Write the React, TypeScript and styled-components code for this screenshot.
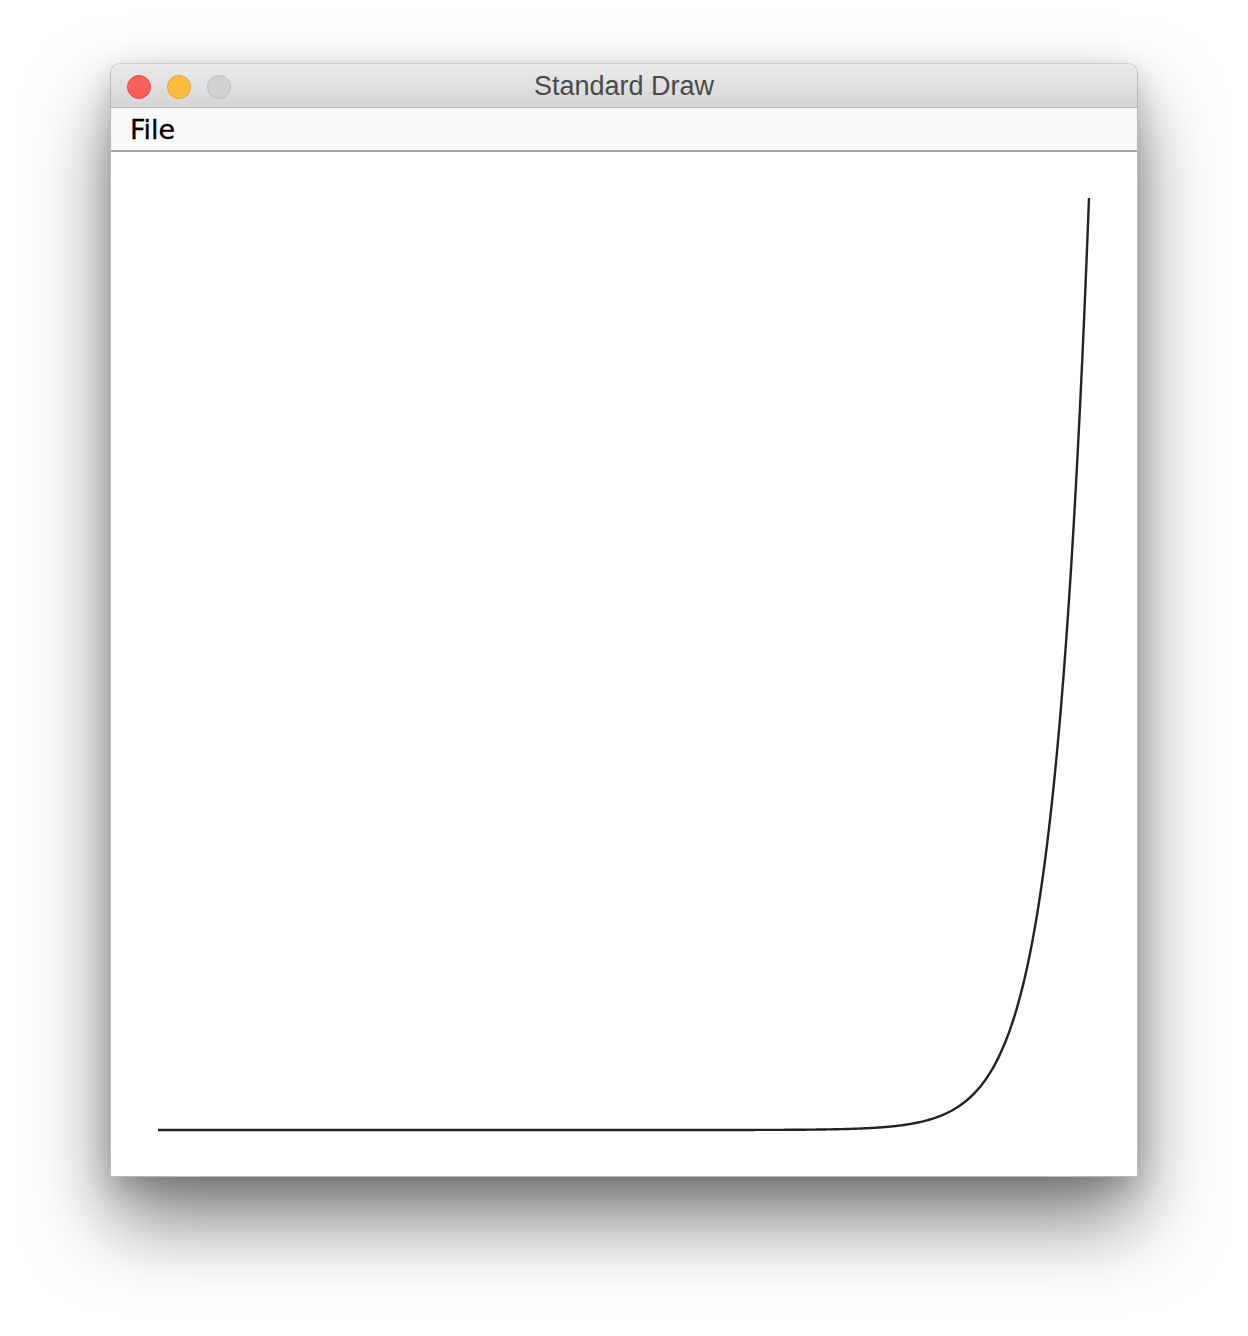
import styled, { createGlobalStyle } from 'styled-components';

const GlobalStyle = createGlobalStyle`
  html, body {
    margin: 0;
    padding: 0;
    background: #ffffff;
  }
  #root {
    width: 1248px;
    height: 1336px;
  }
`;

const Page = styled.div`
  display: flex;
  justify-content: center;
  align-items: flex-start;
  padding-top: 63px;
  height: 100%;
  box-sizing: border-box;
`;

const Window = styled.div`
  width: 1026px;
  display: flex;
  flex-direction: column;
  border-radius: 10px 10px 0 0;
  overflow: hidden;
  border: 1px solid #b9b9b9;
  border-top-color: #cfcfcf;
  box-shadow: 0 44px 80px rgba(0, 0, 0, 0.5), 0 10px 30px rgba(0, 0, 0, 0.18);
  background: #ffffff;
`;

const TitleBar = styled.div`
  height: 43px;
  display: grid;
  grid-template-columns: 1fr auto 1fr;
  align-items: center;
  padding: 0 16px;
  background: linear-gradient(#ebebeb, #d5d5d5);
  border-bottom: 1px solid #b3b3b3;
`;

const Lights = styled.div`
  display: flex;
  gap: 16px;
  padding-top: 2px;
`;

const Light = styled.span<{ $fill: string; $edge: string }>`
  width: 22px;
  height: 22px;
  border-radius: 50%;
  background: ${(p) => p.$fill};
  border: 1px solid ${(p) => p.$edge};
`;

const Title = styled.div`
  font-family: 'Liberation Sans', Arial, sans-serif;
  font-size: 27px;
  color: #4a4a4a;
  padding-top: 2px;
`;

const MenuBar = styled.div`
  height: 42px;
  display: flex;
  align-items: center;
  padding: 0 19px;
  background: #f8f8f8;
  border-bottom: 2px solid #a2a2a2;
`;

const MenuItem = styled.span`
  font-family: 'DejaVu Sans', sans-serif;
  font-size: 27px;
  color: #000000;
  padding-top: 1px;
  -webkit-text-stroke: 0.3px #000000;
`;

const Canvas = styled.svg`
  display: block;
  width: 1024px;
  height: 1024px;
  background: #ffffff;
`;

const points: string[] = [];
for (let x = 47; x <= 978; x += 1) {
  const y = 978 - 932 * Math.exp(0.0282 * (x - 978));
  points.push(`${x},${y.toFixed(2)}`);
}

const App = () => {
  return (
    <>
      <GlobalStyle />
      <Page>
        <Window>
          <TitleBar>
            <Lights>
              <Light $fill="#fc5f57" $edge="#de4b44" />
              <Light $fill="#fdbc3f" $edge="#dea236" />
              <Light $fill="#d1d1d1" $edge="#bcbcbc" />
            </Lights>
            <Title>Standard Draw</Title>
            <span />
          </TitleBar>
          <MenuBar>
            <MenuItem>File</MenuItem>
          </MenuBar>
          <Canvas viewBox="0 0 1024 1024">
            <polyline
              points={points.join(' ')}
              fill="none"
              stroke="#222222"
              strokeWidth={2.4}
              strokeLinejoin="round"
            />
          </Canvas>
        </Window>
      </Page>
    </>
  );
};

export default App;
